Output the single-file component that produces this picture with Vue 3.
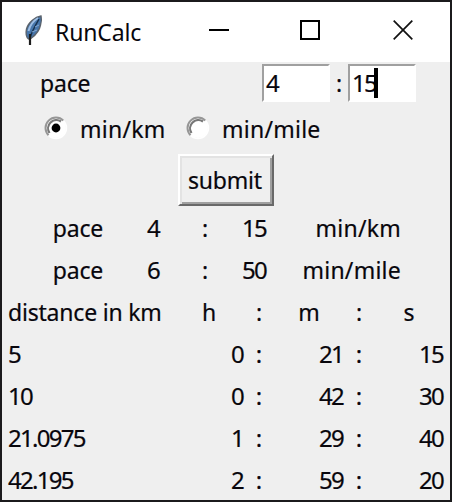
<script setup>
import { ref } from 'vue'

const unit = ref('km')
const paces = [
  { min: 4, sec: 15, unit: 'min/km', id: 'km' },
  { min: 6, sec: 50, unit: 'min/mile', id: 'mile' },
]
const results = [
  { d: '5', h: 0, m: 21, s: 15 },
  { d: '10', h: 0, m: 42, s: 30 },
  { d: '21.0975', h: 1, m: 29, s: 40 },
  { d: '42.195', h: 2, m: 59, s: 20 },
]
</script>

<template>
  <div class="window">
    <header class="titlebar">
      <svg class="feather" width="19" height="34" viewBox="0 0 19 34">
        <path d="M17 2C11 3 4 9 2.500 15c-1 5-.5 8 2 10l3-1c4-3 8-8 9-13 1-3 1.200-6 .5-9Z" fill="#4776ab" stroke="#5b636d" stroke-width="1.400" />
        <path d="M14 4C9 7 6 11 4.500 17" fill="none" stroke="#9fbee2" stroke-width="2" />
        <path d="M15 5c-4 7-7 12-9 19" fill="none" stroke="#17314f" stroke-width="1.400" />
        <path d="M11 13l4-2M8 18l5-2" fill="none" stroke="#86a9d2" stroke-width="1" />
        <path d="M6 20v11" fill="none" stroke="#1c1c1c" stroke-width="2.200" />
      </svg>
      <h1 class="title">RunCalc</h1>
      <div class="controls">
        <svg width="20" height="20" viewBox="0 0 20 20"><path d="M0 10h20" stroke="#000" stroke-width="2" /></svg>
        <svg width="20" height="20" viewBox="0 0 20 20"><rect x="1" y="1" width="18" height="18" fill="none" stroke="#000" stroke-width="2" /></svg>
        <svg class="close" width="20" height="20" viewBox="0 0 20 20"><path d="M.7.7l18.600 18.600M19.300.7L.7 19.300" stroke="#111" stroke-width="1.700" /></svg>
      </div>
    </header>

    <main>
      <div class="entry-row">
        <span class="entry-label">pace</span>
        <div class="entry"><span class="digits">4</span></div>
        <span class="entry-colon">:</span>
        <div class="entry"><span class="digits">15</span><i class="caret"></i></div>
      </div>

      <div class="radio-row">
        <label v-for="p in paces" :key="p.id" class="radio" @click="unit = p.id">
          <svg width="24" height="24" viewBox="0 0 24 24">
            <circle cx="12" cy="12" r="10" fill="#fff" />
            <path d="M4.600 19.400A10.400 10.400 0 0 1 19.400 4.600" fill="none" stroke="#969696" stroke-width="2" />
            <path d="M5.500 17A8.300 8.300 0 0 1 17 5.500" fill="none" stroke="#777" stroke-width="2.200" />
            <path d="M19.400 4.600A10.400 10.400 0 0 1 4.600 19.400" fill="none" stroke="#fff" stroke-width="1.500" />
            <circle v-if="unit === p.id" cx="12" cy="12" r="4.400" fill="#000" />
          </svg>
          <span class="unit">{{ p.unit }}</span>
        </label>
      </div>

      <div class="button-row"><button class="submit">submit</button></div>

      <div class="output">
        <div v-for="p in paces" :key="p.id" class="pace-row">
          <span>pace</span>
          <span class="digits">{{ p.min }}</span>
          <span>:</span>
          <span class="digits">{{ p.sec }}</span>
          <span class="unit">{{ p.unit }}</span>
        </div>

        <div class="result-row head">
          <span>distance in km</span>
          <span>h</span><span>:</span><span>m</span><span>:</span><span>s</span>
        </div>
        <div v-for="r in results" :key="r.d" class="result-row digits">
          <span>{{ r.d }}</span>
          <span class="value">{{ r.h }}</span><span class="colon">:</span>
          <span class="value">{{ r.m }}</span><span class="colon">:</span>
          <span class="value">{{ r.s }}</span>
        </div>
      </div>
    </main>
  </div>
</template>

<style>
body {
  overflow: hidden;
}
</style>

<style scoped>
.window {
  box-sizing: border-box;
  width: 452px;
  height: 502px;
  overflow: hidden;
  border: 2px solid #1b1a1c;
  background: #efefef;
  color: #08060c;
  font: 23px/42px "Noto Sans", "Open Sans", sans-serif;
  letter-spacing: -0.2px;
  white-space: nowrap;
}
main {
  -webkit-text-stroke: 0.2px #08060c;
}
.titlebar {
  display: flex;
  align-items: center;
  height: 60px;
  padding-left: 22px;
  background: #fff;
}
.feather {
  flex: none;
  margin-top: -2px;
}
.title {
  width: 150px;
  margin: 0 0 0 12px;
  font-size: 23px;
  font-weight: 400;
  letter-spacing: -0.15px;
}
.controls {
  display: flex;
  gap: 71px;
  margin: -4px 0 0 4px;
}
.close {
  margin-left: 2px;
}
.digits {
  font-size: 24px;
  letter-spacing: -1.7px;
}
.unit {
  letter-spacing: 0.25px;
}
.entry-row {
  display: flex;
  height: 43px;
  padding-left: 38px;
}
.entry-label {
  width: 222px;
}
.entry {
  display: flex;
  box-sizing: border-box;
  width: 68px;
  height: 38px;
  margin-top: 2px;
  padding-left: 2px;
  border: 2px solid #fff;
  border-top-color: #a0a0a0;
  border-left-color: #a0a0a0;
  background: #fff;
  line-height: 33px;
}
.entry-colon {
  width: 18px;
  text-align: center;
}
.caret {
  width: 4px;
  height: 30px;
  margin: 2px 0 0 -2px;
  background: #000;
}
.radio-row {
  display: flex;
  height: 49px;
  padding-left: 42px;
  line-height: 48px;
}
.radio {
  display: flex;
  width: 142px;
}
.radio svg {
  flex: none;
  margin: 11px 12px 0 0;
}
.button-row {
  height: 54px;
  padding-left: 176px;
}
.submit {
  display: block;
  box-sizing: border-box;
  width: 96px;
  height: 52px;
  padding: 0 2px 0 0;
  border: 2px solid #fff;
  border-right-color: #696969;
  border-bottom-color: #696969;
  background: #efefef;
  box-shadow: inset 2px 2px #e3e3e3, inset -2px -2px #a0a0a0;
  color: inherit;
  font: inherit;
  letter-spacing: inherit;
  line-height: 44px;
}
.output {
  margin-top: -1px;
}
.pace-row {
  display: grid;
  grid-template-columns: 101px 56px 49px 58px 135px;
  height: 42px;
  text-align: right;
}
.result-row {
  display: grid;
  grid-template-columns: 164px 74px 26px 74px 26px 74px;
  height: 42px;
  padding-left: 6px;
  text-align: right;
}
.result-row span:first-child {
  text-align: left;
}
.head {
  text-align: center;
}
.value {
  padding-right: 3px;
}
.colon {
  padding-right: 2px;
  text-align: center;
}
</style>
